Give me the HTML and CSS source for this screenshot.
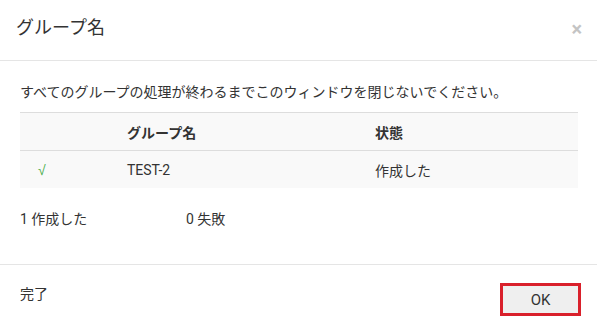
FILE: index.html
```html
<!DOCTYPE html>
<html lang="ja">
<head>
<meta charset="utf-8">
<link rel="stylesheet" href="styles.css">
</head>
<body>
<div class="dialog">
  <div class="header">
    <div class="title">グループ名</div>
    <div class="close">×</div>
  </div>
  <div class="body">
    <div class="message">すべてのグループの処理が終わるまでこのウィンドウを閉じないでください。</div>
    <div class="table">
      <div class="row head">
        <div class="c1"></div>
        <div class="c2">グループ名</div>
        <div class="c3">状態</div>
      </div>
      <div class="row">
        <div class="c1 check">√</div>
        <div class="c2">TEST-2</div>
        <div class="c3">作成した</div>
      </div>
    </div>
    <div class="summary">
      <div class="s1">1 作成した</div>
      <div class="s2">0 失敗</div>
    </div>
  </div>
  <div class="footer">
    <div class="done">完了</div>
    <button class="ok">OK</button>
  </div>
</div>
</body>
</html>
```
FILE: styles.css
```css
html, body {
  margin: 0;
  padding: 0;
  background: #fff;
}
body {
  font-family: Roboto, "Noto Sans CJK JP", sans-serif;
  color: #333;
  font-size: 14px;
}
.dialog {
  width: 597px;
  height: 335px;
  display: flex;
  flex-direction: column;
}
.header {
  height: 60px;
  border-bottom: 1px solid #e5e5e5;
  display: flex;
  align-items: center;
  justify-content: space-between;
  padding: 0 15px 0 16px;
}
.title {
  font-size: 18px;
  line-height: 24px;
  margin-top: -5px;
}
.close {
  font-size: 20px;
  font-weight: bold;
  color: #c4c4c4;
  line-height: 20px;
  margin-top: -2px;
}
.body {
  padding: 21px 19px 35px 20px;
}
.message {
  line-height: 20px;
  margin-bottom: 10px;
}
.table {
  background: #f9f9f9;
  border-top: 1px solid #ddd;
}
.row {
  display: grid;
  grid-template-columns: 107px 248px 1fr;
  align-items: center;
  height: 37px;
}
.row.head {
  font-weight: bold;
  border-bottom: 1px solid #ddd;
}
.c1 {
  padding-left: 18px;
}
.check {
  color: #4cae4c;
  font-size: 14px;
  font-family: "DejaVu Sans", sans-serif;
  font-weight: 300;
}
.summary {
  display: grid;
  grid-template-columns: 166px 1fr;
  line-height: 20px;
  margin-top: 21px;
}
.footer {
  border-top: 1px solid #e5e5e5;
  display: flex;
  justify-content: space-between;
  align-items: flex-start;
  padding: 18px 16px 0 20px;
}
.done {
  line-height: 20px;
  margin-top: 1px;
}
.ok {
  width: 81px;
  height: 33px;
  background: #efefef;
  border: 3px solid #d9202b;
  font-family: Roboto, sans-serif;
  font-size: 15px;
  color: #333;
  padding: 0;
}
```
